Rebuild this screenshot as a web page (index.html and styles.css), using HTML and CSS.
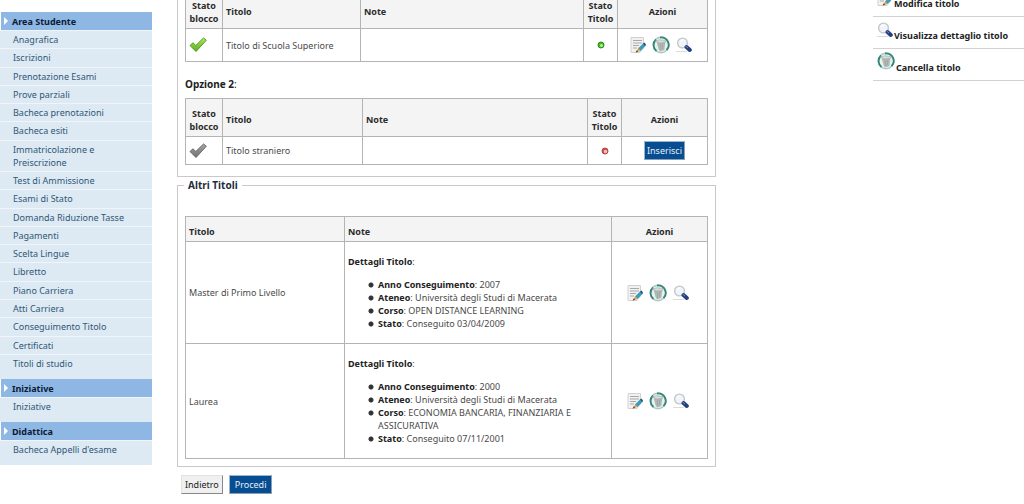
FILE: index.html
```html
<!DOCTYPE html>
<html lang="it">
<head>
<meta charset="utf-8">
<title>Titoli di studio</title>
<link rel="stylesheet" href="styles.css">
</head>
<body>
<svg class="defs" aria-hidden="true">
  <defs>
    <linearGradient id="green" x1="0" y1="0" x2="0" y2="1"><stop offset="0" stop-color="#b4e860"/><stop offset="1" stop-color="#58ac1a"/></linearGradient>
    <linearGradient id="grey" x1="0" y1="0" x2="0" y2="1"><stop offset="0" stop-color="#a8a8a8"/><stop offset="1" stop-color="#6f6f6f"/></linearGradient>
    <symbol id="check" viewBox="0 0 18 16"><path d="M1 8.500 4 5.800 6.800 8.500 14.500 1 17.300 3.200 7 14.500Z" stroke-width="1" stroke-linejoin="round"/></symbol>
    <symbol id="edit" viewBox="0 0 16 16">
      <path d="M1 .5H13.500V11L10 15.500H1Z" fill="#f1f1f1" stroke="#d2d2d2"/>
      <path d="M3 3.500H12M3 6H12M3 8.500H9M3 11H7" stroke="#a9a9a9"/>
      <path d="M8 11.500 13.500 6 16 8.500 10.500 14Z" fill="#3b9cba"/>
      <path d="M13 6.500 14.500 5.500 16 7.500 15 9Z" fill="#2d5577"/>
      <path d="M8 11.500 10.500 14 6 15.500Z" fill="#e7a43e"/>
      <path d="M5.500 15.500 7 13 8 15Z" fill="#6c4c2a"/>
    </symbol>
    <symbol id="trash" viewBox="0 0 18 18">
      <circle cx="9" cy="9" r="7.700" fill="#e9f1ef" stroke="#a9cbc3" stroke-width="1.500"/>
      <path d="M4 3.500A7.500 7.500 0 0 0 4.500 15M8 1.500A7.500 7.500 0 0 1 14.500 14.200" fill="none" stroke="#37867a" stroke-width="1.800"/>
      <path d="M4.500 5 13.500 5 12.300 14 8 15.500 6.500 13Z" fill="#b0b7b5"/>
      <path d="M3.500 5 7.500 3.800 14 4.500 13 6.500 7 7Z" fill="#d5dcda" stroke="#9aaaa6" stroke-width=".6"/>
      <path d="M8.500 8.500V13.500M10.500 8V13" stroke="#9da6a3" stroke-width=".8"/>
    </symbol>
    <symbol id="lens" viewBox="0 0 16 16">
      <path d="M0 14.500H11" stroke="#dcdcdc"/>
      <circle cx="6.500" cy="6" r="4.900" fill="#f1f5fa" stroke="#c3c7ce" stroke-width="1.400"/>
      <path d="M4 5.500A3 3 0 0 1 7 3" fill="none" stroke="#fff"/>
      <path d="M10.500 10 13.800 13" stroke="#253f80" stroke-width="4" stroke-linecap="round"/>
      <path d="M9.500 9 12 11" stroke="#6e8fc4" stroke-width="1"/>
    </symbol>
    <symbol id="dot-ok" viewBox="0 0 8 8"><circle cx="4" cy="4" r="3" fill="#43bd20" stroke="#2d8a22"/><circle cx="4.500" cy="4.500" r="1.500" fill="#b5f48b"/></symbol>
    <symbol id="dot-no" viewBox="0 0 8 8"><circle cx="4" cy="4" r="3" fill="#d84a4a" stroke="#b04848"/><circle cx="4.500" cy="4.500" r="1.700" fill="#f7c3c3"/></symbol>
  </defs>
</svg>
<div class="page">
  <nav class="sidebar" aria-label="Menu">
    <h2 class="menu-title">Area Studente</h2>
    <ul class="menu menu-long">
      <li><a href="#">Anagrafica</a></li>
      <li><a href="#">Iscrizioni</a></li>
      <li><a href="#">Prenotazione Esami</a></li>
      <li><a href="#">Prove parziali</a></li>
      <li><a href="#">Bacheca prenotazioni</a></li>
      <li><a href="#">Bacheca esiti</a></li>
      <li><a href="#">Immatricolazione e<br>Preiscrizione</a></li>
      <li><a href="#">Test di Ammissione</a></li>
      <li><a href="#">Esami di Stato</a></li>
      <li><a href="#">Domanda Riduzione Tasse</a></li>
      <li><a href="#">Pagamenti</a></li>
      <li><a href="#">Scelta Lingue</a></li>
      <li><a href="#">Libretto</a></li>
      <li><a href="#">Piano Carriera</a></li>
      <li><a href="#">Atti Carriera</a></li>
      <li><a href="#">Conseguimento Titolo</a></li>
      <li><a href="#">Certificati</a></li>
      <li><a href="#">Titoli di studio</a></li>
    </ul>
    <h2 class="menu-title">Iniziative</h2>
    <ul class="menu"><li><a href="#">Iniziative</a></li></ul>
    <h2 class="menu-title">Didattica</h2>
    <ul class="menu"><li><a href="#">Bacheca Appelli d'esame</a></li></ul>
  </nav>

  <main class="content">
    <form>
      <section class="panel options">
        <table class="grid">
          <colgroup><col class="c-lock"><col class="c-title"><col><col class="c-state"><col class="c-act"></colgroup>
          <thead><tr><th class="mid">Stato blocco</th><th>Titolo</th><th>Note</th><th class="mid">Stato Titolo</th><th class="mid">Azioni</th></tr></thead>
          <tbody><tr class="row-icons">
            <td><svg class="check ok" role="img" aria-label="Attivo"><use href="#check"/></svg></td>
            <td>Titolo di Scuola Superiore</td><td></td>
            <td class="mid"><svg class="dot" role="img" aria-label="Completo"><use href="#dot-ok"/></svg></td>
            <td><div class="actions">
              <a href="#" aria-label="Modifica titolo"><svg class="icon"><use href="#edit"/></svg></a>
              <a href="#" aria-label="Cancella titolo"><svg class="icon-lg"><use href="#trash"/></svg></a>
              <a href="#" aria-label="Visualizza dettaglio titolo"><svg class="icon"><use href="#lens"/></svg></a>
            </div></td>
          </tr></tbody>
        </table>
        <h3 class="option-title">Opzione 2<span class="plain">:</span></h3>
        <table class="grid">
          <colgroup><col class="c-lock"><col class="c-title-wide"><col><col class="c-state"><col class="c-button"></colgroup>
          <thead><tr><th class="mid">Stato blocco</th><th>Titolo</th><th>Note</th><th class="mid">Stato Titolo</th><th class="mid">Azioni</th></tr></thead>
          <tbody><tr class="row-button">
            <td><svg class="check off" role="img" aria-label="Non attivo"><use href="#check"/></svg></td>
            <td>Titolo straniero</td><td></td>
            <td class="mid"><svg class="dot" role="img" aria-label="Mancante"><use href="#dot-no"/></svg></td>
            <td class="mid"><button type="button" class="btn primary">Inserisci</button></td>
          </tr></tbody>
        </table>
      </section>

      <fieldset class="panel others">
        <legend>Altri Titoli</legend>
        <table class="grid">
          <colgroup><col class="c-name"><col><col class="c-tools"></colgroup>
          <thead><tr class="row-single"><th>Titolo</th><th>Note</th><th class="mid">Azioni</th></tr></thead>
          <tbody>
            <tr>
              <td>Master di Primo Livello</td>
              <td class="details"><p><b>Dettagli Titolo</b>:</p>
                <ul>
                  <li><b>Anno Conseguimento</b>: 2007</li>
                  <li><b>Ateneo</b>: Università degli Studi di Macerata</li>
                  <li><b>Corso</b>: OPEN DISTANCE LEARNING</li>
                  <li><b>Stato</b>: Conseguito 03/04/2009</li>
                </ul></td>
              <td><div class="actions">
                <a href="#" aria-label="Modifica titolo"><svg class="icon"><use href="#edit"/></svg></a>
                <a href="#" aria-label="Cancella titolo"><svg class="icon-lg"><use href="#trash"/></svg></a>
                <a href="#" aria-label="Visualizza dettaglio titolo"><svg class="icon"><use href="#lens"/></svg></a>
              </div></td>
            </tr>
            <tr>
              <td>Laurea</td>
              <td class="details"><p><b>Dettagli Titolo</b>:</p>
                <ul>
                  <li><b>Anno Conseguimento</b>: 2000</li>
                  <li><b>Ateneo</b>: Università degli Studi di Macerata</li>
                  <li><b>Corso</b>: ECONOMIA BANCARIA, FINANZIARIA E ASSICURATIVA</li>
                  <li><b>Stato</b>: Conseguito 07/11/2001</li>
                </ul></td>
              <td><div class="actions">
                <a href="#" aria-label="Modifica titolo"><svg class="icon"><use href="#edit"/></svg></a>
                <a href="#" aria-label="Cancella titolo"><svg class="icon-lg"><use href="#trash"/></svg></a>
                <a href="#" aria-label="Visualizza dettaglio titolo"><svg class="icon"><use href="#lens"/></svg></a>
              </div></td>
            </tr>
          </tbody>
        </table>
      </fieldset>
      <div class="buttons">
        <button type="button" class="btn">Indietro</button>
        <button type="button" class="btn primary">Procedi</button>
      </div>
    </form>
  </main>

  <aside class="legend" aria-label="Legenda">
    <ul>
      <li><svg class="icon"><use href="#edit"/></svg><span>Modifica titolo</span></li>
      <li><svg class="icon"><use href="#lens"/></svg><span>Visualizza dettaglio titolo</span></li>
      <li><svg class="icon-lg"><use href="#trash"/></svg><span>Cancella titolo</span></li>
    </ul>
  </aside>
</div>
</body>
</html>
```

FILE: styles.css
```css
* { box-sizing: border-box; }
html { overflow: hidden; }
body {
  margin: 0;
  background: #fff;
  color: #4a4a4a;
  font: 9px/13px "Noto Sans", "Open Sans", sans-serif;
}
.defs { position: absolute; width: 0; height: 0; }
ul, h2, h3, p { margin: 0; padding: 0; }
ul { list-style: none; }
svg { display: block; }

.page {
  display: grid;
  grid-template-columns: 152px minmax(0, 1fr) 151px;
  align-items: start;
}

/* Menu */
.sidebar { padding-top: 12px; }
.menu-title {
  display: flex;
  align-items: center;
  gap: 4px;
  height: 18px;
  margin-left: 1px;
  padding-left: 3px;
  background: #8eb7e4;
  color: #0b1b35;
  font-size: 9px;
  font-weight: bold;
}
.menu-title::before {
  content: "";
  border: solid transparent;
  border-width: 4px 0 4px 4px;
  border-left-color: #fff;
}
.menu {
  display: flex;
  flex-direction: column;
  padding-bottom: 7px;
  background: #dde9f3;
}
.menu-long { min-height: 349px; }
.menu li {
  flex: 1 0 auto;
  padding: 2px 4px 2px 13px;
  border-top: 1px solid #eff5fa;
}
.menu a { display: block; color: #2f5877; text-decoration: none; }

/* Main column; its first table starts above the fold */
.content { margin-top: -10px; padding: 0 157px 0 25px; }
.panel { min-width: 0; margin: 0; border: 1px solid #c9c9c9; }
.options { padding: 0 7px 11px; border-top: 0; }
.others { margin-top: 2px; padding: 24px 7px 7px; }
.others legend {
  margin-left: -1px;
  padding: 0 4px;
  color: #1f2d3d;
  font-size: 10px;
  font-weight: bold;
}
.option-title {
  padding: 16px 0 7px;
  color: #222;
  font-size: 10px;
  line-height: 13px;
}
.plain { font-weight: normal; }

.grid {
  width: 100%;
  table-layout: fixed;
  border: 1px solid #999;
  border-collapse: collapse;
}
.grid th, .grid td {
  padding: 0 3px;
  border: 1px solid #b4b4b4;
  text-align: left;
}
.grid th { height: 38px; padding-top: 4px; background: #f4f4f4; color: #2b2b2b; }
.grid .row-single th { height: 25px; }
.grid .mid { text-align: center; }
.row-icons td { height: 33px; }
.row-button td { height: 28px; }
.c-lock { width: 37px; }
.c-title { width: 138px; }
.c-title-wide { width: 140px; }
.c-state { width: 34px; }
.c-act { width: 90px; }
.c-button { width: 86px; }
.c-name { width: 159px; }
.c-tools { width: 96px; }

.grid .details { padding: 13px 3px; }
.details b { color: #222; }
.details ul { padding: 10px 20px 0 20px; }
.details li {
  padding-left: 10px;
  background: radial-gradient(circle at 3px 7px, #333 2px, transparent 3px) no-repeat;
}

.actions {
  display: flex;
  align-items: center;
  justify-content: center;
  gap: 6px;
  padding-right: 4px;
}
.icon { width: 16px; height: 16px; }
.icon-lg { width: 18px; height: 18px; }
.check { width: 18px; height: 16px; }
.ok { fill: url(#green); stroke: #4f9e20; }
.off { fill: url(#grey); stroke: #686868; }
.dot { width: 8px; height: 8px; margin: 0 auto; }

.buttons { display: flex; gap: 6px; padding: 8px 4px; }
.btn {
  padding: 2px;
  border: 1px solid;
  border-color: #e2e2e2 #888 #888 #e2e2e2;
  background: #f0f0f0;
  color: #222;
  font: inherit;
}
.primary { border-color: #9db6cf #8a9fb5 #8a9fb5 #9db6cf; background: #064d91; color: #e6eef7; }
.buttons .btn { padding: 2px 3px; }
.buttons .primary { padding: 2px 5px; }

/* Icon key */
.legend { margin-top: -15px; }
.legend li {
  display: flex;
  align-items: flex-end;
  gap: 1px;
  height: 32px;
  padding: 0 4px 6px;
  border-bottom: 1px solid #d2d2d2;
}
.legend svg { margin-bottom: 4px; }
.legend span { color: #222; font-weight: bold; white-space: nowrap; }
```
